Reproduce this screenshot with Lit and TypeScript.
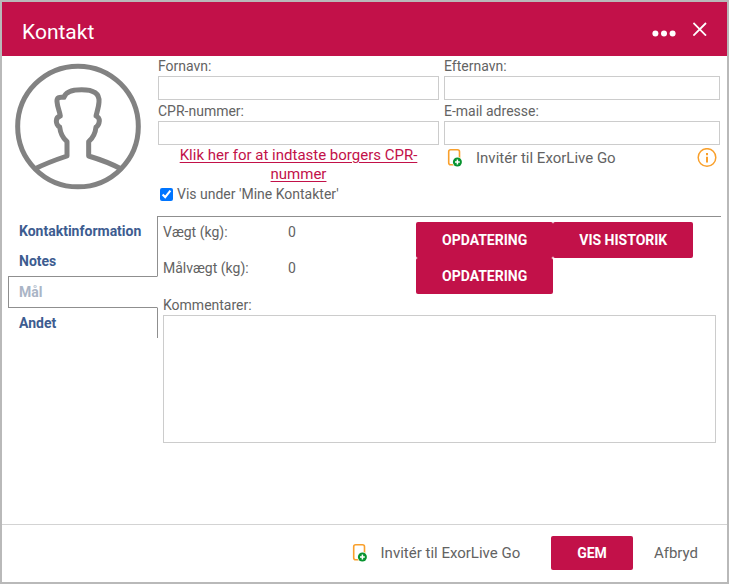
import { LitElement, html, css } from "lit";
import { customElement, state } from "lit/decorators.js";
import { classMap } from "lit/directives/class-map.js";

const phoneIcon = html`<svg class="phone" width="16" height="20" viewBox="0 0 16 20" aria-hidden="true">
  <rect x="1.7" y="1.7" width="10.8" height="15" rx="2" fill="#fff" stroke="#f9a02c" stroke-width="1.6" />
  <circle cx="10.4" cy="14" r="5.2" fill="#fff" />
  <circle cx="10.4" cy="14" r="4.5" fill="#07932f" />
  <path d="M10.4 11.6v4.8M8 14h4.8" stroke="#fff" stroke-width="1.5" />
</svg>`;

const tabs = ["Kontaktinformation", "Notes", "Mål", "Andet"];

@customElement("app-root")
export class AppRoot extends LitElement {
  static styles = css`
    :host {
      display: flex;
      box-sizing: border-box;
      min-height: 100vh;
      padding: 2px;
      background: #b9b9b9;
      color: #636363;
      font: 14px/20px Roboto, "Liberation Sans", sans-serif;
    }
    * {
      box-sizing: border-box;
    }
    button {
      font: inherit;
      color: inherit;
      background: none;
      border: 0;
      padding: 0;
      margin: 0;
      cursor: pointer;
    }
    svg {
      display: block;
      flex: none;
    }
    .dialog {
      flex: 1;
      display: flex;
      flex-direction: column;
      min-width: 0;
      background: #fff;
    }
    header {
      display: flex;
      align-items: center;
      gap: 16px;
      height: 54px;
      padding: 0 20px;
      background: #c21149;
      color: #fff;
    }
    h1 {
      flex: 1;
      margin: 0;
      padding-top: 6px;
      font-size: 21px;
      line-height: 28px;
      font-weight: 400;
    }
    .top {
      display: flex;
      height: 160px;
      padding-right: 7px;
    }
    .avatar {
      width: 156px;
      flex: none;
      padding: 7px 0 0 13px;
    }
    .fields {
      flex: 1;
      display: grid;
      grid-template-columns: 281fr 276fr;
      column-gap: 5px;
      row-gap: 1px;
      align-content: start;
    }
    .field label,
    .field input {
      display: block;
    }
    input[type="text"],
    textarea {
      width: 100%;
      border: 1px solid #ccc;
      border-radius: 0;
      background: #fff;
      font: inherit;
      margin: 0;
    }
    input[type="text"] {
      height: 24px;
      padding: 0 4px;
    }
    .cpr {
      text-align: center;
      font-size: 15px;
      line-height: 19px;
      padding: 0 12px;
    }
    a {
      color: #c21149;
      text-underline-offset: 2px;
    }
    .invite {
      display: flex;
      align-items: center;
      gap: 13px;
      font-size: 15px;
    }
    .info-row {
      display: flex;
      align-items: center;
      justify-content: space-between;
      height: 24px;
      padding: 0 3px;
    }
    .check {
      display: flex;
      align-items: center;
      gap: 4px;
      padding-left: 2px;
    }
    .check input {
      width: 13px;
      height: 13px;
      margin: 0;
      accent-color: #0075ff;
    }
    .lower {
      display: flex;
      padding: 0 6px;
    }
    .tabs {
      width: 150px;
      flex: none;
      display: flex;
      flex-direction: column;
      align-self: flex-start;
    }
    .tab {
      height: 30px;
      padding-left: 11px;
      border-right: 1px solid #8f8f8f;
      text-align: left;
      font-weight: 700;
      color: #3d5c90;
    }
    .tab.on {
      height: 32px;
      padding-left: 10px;
      border: 1px solid #8f8f8f;
      border-right-color: transparent;
      color: #aab5c6;
    }
    .panel {
      flex: 1;
      min-width: 0;
      border-top: 1px solid #8f8f8f;
      padding: 5px 5px 0;
    }
    .row {
      display: grid;
      grid-template-columns: 125px 128px 1fr;
      min-height: 36px;
    }
    .actions {
      display: flex;
    }
    .primary {
      height: 36px;
      padding: 0 26px;
      border-radius: 2px;
      background: #c21149;
      color: #fff;
      font-weight: 700;
    }
    .comments {
      display: block;
      margin-top: 1px;
    }
    textarea {
      display: block;
      height: 128px;
      resize: none;
    }
    footer {
      display: flex;
      align-items: center;
      justify-content: flex-end;
      height: 58px;
      margin-top: auto;
      padding: 0 29px 2px 0;
      border-top: 1px solid #d3d3d3;
      font-size: 15px;
    }
    footer .primary {
      height: 34px;
      margin: 0 21px 0 31px;
      font-size: 14px;
    }
  `;

  @state() private active = "Mål";

  private field(id: string, label: string) {
    return html`<div class="field">
      <label for=${id}>${label}</label><input id=${id} type="text" />
    </div>`;
  }

  private avatar() {
    return html`<svg width="126" height="127" viewBox="45 188 378 381" role="img" aria-label="Profilbillede"
      fill="none" stroke="#828282" stroke-width="15" stroke-linejoin="round">
      <circle cx="234" cy="378.5" r="181" />
      <path d="M104 506C135 490 168 478 201 467V424C187 412 181 398 179 380C172 378 169 368 169 362C169 352 173 349 181 347C179 333 172 320 171 304C170 292 177 289 192 291C196 275 215 268 245 268C281 268 299 279 297 305C296 321 291 335 288 347C296 350 298 355 298 362C297 372 293 378 288 380C286 400 280 412 266 424V467C299 477 332 489 364 506" />
    </svg>`;
  }

  render() {
    return html`<section class="dialog" role="dialog" aria-label="Kontakt">
      <header>
        <h1>Kontakt</h1>
        <button aria-label="Flere">
          <svg width="25" height="18" viewBox="0 0 25 18" fill="#fff">
            <circle cx="3.4" cy="13.5" r="3" /><circle cx="12" cy="13.5" r="3" /><circle cx="20.6" cy="13.5" r="3" />
          </svg>
        </button>
        <button aria-label="Luk">
          <svg width="14" height="14" viewBox="0 0 14 14" stroke="#fff" stroke-width="1.8">
            <path d="M.4 1l12.6 12.6M13 1L.4 13.6" />
          </svg>
        </button>
      </header>
      <div class="top">
        <div class="avatar">${this.avatar()}</div>
        <div class="fields">
          ${this.field("first", "Fornavn:")} ${this.field("last", "Efternavn:")}
          ${this.field("cpr", "CPR-nummer:")} ${this.field("mail", "E-mail adresse:")}
          <div>
            <div class="cpr"><a href="#">Klik her for at indtaste borgers CPR-nummer</a></div>
            <label class="check"><input type="checkbox" checked />Vis under 'Mine Kontakter'</label>
          </div>
          <div class="info-row">
            <button class="invite">${phoneIcon}Invitér til ExorLive Go</button>
            <button aria-label="Information">
              <svg width="20" height="20" viewBox="0 0 20 20">
                <circle cx="10" cy="9.5" r="8.8" fill="none" stroke="#f9a02c" stroke-width="1.5" />
                <path d="M10 5v2.2M10 8.8v5.6" stroke="#f9a02c" stroke-width="2" />
              </svg>
            </button>
          </div>
        </div>
      </div>
      <div class="lower">
        <nav class="tabs" role="tablist">
          ${tabs.map(
            (t) => html`<button
              role="tab"
              aria-selected=${t === this.active}
              class=${classMap({ tab: true, on: t === this.active })}
              @click=${() => (this.active = t)}
            >${t}</button>`
          )}
        </nav>
        <div class="panel">
          <div class="row">
            <span>Vægt (kg):</span><span>0</span>
            <div class="actions">
              <button class="primary">OPDATERING</button><button class="primary">VIS HISTORIK</button>
            </div>
          </div>
          <div class="row">
            <span>Målvægt (kg):</span><span>0</span>
            <div class="actions"><button class="primary">OPDATERING</button></div>
          </div>
          <label class="comments" for="comments">Kommentarer:</label>
          <textarea id="comments"></textarea>
        </div>
      </div>
      <footer>
        <button class="invite">${phoneIcon}Invitér til ExorLive Go</button>
        <button class="primary">GEM</button>
        <button>Afbryd</button>
      </footer>
    </section>`;
  }
}
